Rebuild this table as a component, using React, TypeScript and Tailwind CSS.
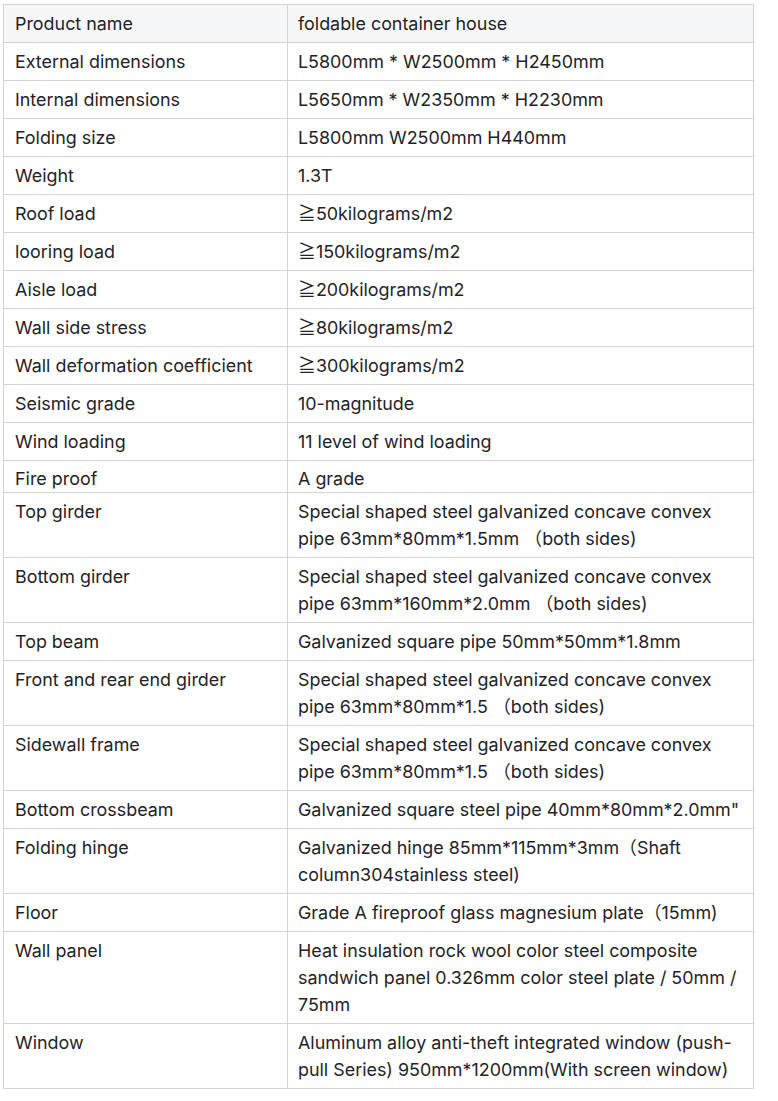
const rows: [string, string][] = [
  ["Product name", "foldable container house"],
  ["External dimensions", "L5800mm * W2500mm * H2450mm"],
  ["Internal dimensions", "L5650mm * W2350mm * H2230mm"],
  ["Folding size", "L5800mm W2500mm H440mm"],
  ["Weight", "1.3T"],
  ["Roof load", "≧50kilograms/m2"],
  ["looring load", "≧150kilograms/m2"],
  ["Aisle load", "≧200kilograms/m2"],
  ["Wall side stress", "≧80kilograms/m2"],
  ["Wall deformation coefficient", "≧300kilograms/m2"],
  ["Seismic grade", "10-magnitude"],
  ["Wind loading", "11 level of wind loading"],
  ["Fire proof", "A grade"],
  ["Top girder", "Special shaped steel galvanized concave convex pipe 63mm*80mm*1.5mm （both sides)"],
  ["Bottom girder", "Special shaped steel galvanized concave convex pipe 63mm*160mm*2.0mm （both sides)"],
  ["Top beam", "Galvanized square pipe 50mm*50mm*1.8mm"],
  ["Front and rear end girder", "Special shaped steel galvanized concave convex pipe 63mm*80mm*1.5 （both sides)"],
  ["Sidewall frame", "Special shaped steel galvanized concave convex pipe 63mm*80mm*1.5 （both sides)"],
  ["Bottom crossbeam", "Galvanized square steel pipe 40mm*80mm*2.0mm\""],
  ["Folding hinge", "Galvanized hinge 85mm*115mm*3mm（Shaft column304stainless steel)"],
  ["Floor", "Grade A fireproof glass magnesium plate（15mm)"],
  ["Wall panel", "Heat insulation rock wool color steel composite sandwich panel 0.326mm color steel plate / 50mm / 75mm"],
  ["Window", "Aluminum alloy anti-theft integrated window (push-pull Series) 950mm*1200mm(With screen window)"],
];

export default function App() {
  return (
    <div className="min-h-screen bg-white pl-[3px] pt-[4px] text-[17.9px] leading-[27px] text-[#1f2328] [font-family:Inter,'Noto_Sans','Noto_Sans_CJK_SC',sans-serif]">
      <table className="w-[751px] table-fixed border-collapse border border-[#d4d4d4]">
        <colgroup>
          <col className="w-[284px]" />
          <col />
        </colgroup>
        <tbody>
          {rows.map(([name, value], i) => {
            const short = name === "Fire proof";
            return (
              <tr key={name} className={i === 0 ? "bg-[#f6f7f9]" : "bg-white"}>
                <td className={`border border-[#d4d4d4] px-[11px] align-top ${short ? "pt-[5px] pb-0 leading-[26px]" : "py-[5px]"}`}>
                  {name}
                </td>
                <td className={`border border-[#d4d4d4] px-[10px] align-top ${short ? "pt-[5px] pb-0 leading-[26px]" : "py-[5px]"}`}>
                  {value}
                </td>
              </tr>
            );
          })}
        </tbody>
      </table>
    </div>
  );
}
